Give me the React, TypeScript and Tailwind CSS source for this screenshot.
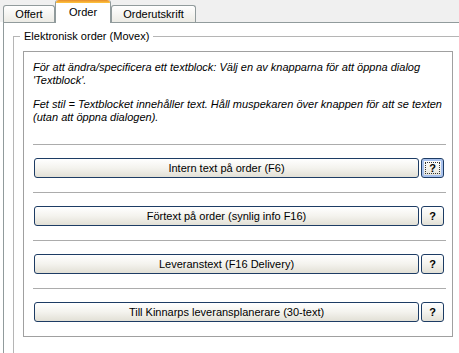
import React from 'react';

const rows = [
  { label: 'Intern text på order (F6)', focused: true },
  { label: 'Förtext på order (synlig info F16)', focused: false },
  { label: 'Leveranstext (F16 Delivery)', focused: false },
  { label: 'Till Kinnarps leveransplanerare (30-text)', focused: false },
];

function XpButton({ children, className = '' }: { children: React.ReactNode; className?: string }) {
  return (
    <button
      className={`h-[20px] rounded-[3px] border border-[#1d3c64] bg-gradient-to-b from-white via-[#f4f3ee] to-[#e2e0d6] text-[11px] leading-none text-black ${className}`}
    >
      {children}
    </button>
  );
}

function HelpButton({ focused }: { focused: boolean }) {
  if (!focused) {
    return <XpButton className="w-[23px] font-bold">?</XpButton>;
  }
  return (
    <button className="relative h-[20px] w-[23px] rounded-[3px] border border-[#1d3c64] bg-gradient-to-b from-white via-[#f4f3ee] to-[#e2e0d6] text-[11px] font-bold leading-none text-black shadow-[inset_0_0_0_2px_#a9c2ee]">
      <span className="absolute inset-[3px] border border-dotted border-[#333]" />
      ?
    </button>
  );
}

export default function App() {
  return (
    <div
      className="flex h-[353px] w-[459px] flex-col overflow-hidden bg-white text-[11px] text-black"
      style={{ fontFamily: '"Liberation Sans", Arial, sans-serif' }}
    >
      {/* tab strip */}
      <div className="flex h-[27px] items-end bg-[#f0f0f0] pl-[3px]">
        <div className="flex h-[17px] w-[52px] items-center justify-center rounded-t-[3px] border border-b-0 border-[#919b9c] bg-gradient-to-b from-white to-[#ecebe5]">
          Offert
        </div>
        <div className="relative z-10 -mb-px flex h-[23px] w-[56px] flex-col rounded-t-[3px] border-x border-[#919b9c] bg-white">
          <div className="h-[3px] rounded-t-[3px] bg-gradient-to-b from-[#e68b2c] to-[#ffc73c]" />
          <div className="flex flex-1 items-center justify-center pb-[2px]">Order</div>
        </div>
        <div className="flex h-[17px] w-[85px] items-center justify-center rounded-t-[3px] border border-b-0 border-[#919b9c] bg-gradient-to-b from-white to-[#ecebe5]">
          Orderutskrift
        </div>
      </div>

      {/* tab page */}
      <div className="ml-[3px] flex-1 border-l border-t border-[#919b9c] bg-white">
        <div className="relative ml-[9px] mt-[13px] h-[400px] border-l border-t border-[#b5b5b5]">
          <span className="absolute left-[6px] top-[-7px] bg-white px-[4px] leading-[13px]">
            Elektronisk order (Movex)
          </span>

          <div className="ml-[9px] mt-[14px] w-[430px] border border-[#a0a0a0] bg-white pl-[9px] pr-[6px] pt-[9px]">
            <div className="italic leading-[13px]">
              <p>För att ändra/specificera ett textblock: Välj en av knapparna för att öppna dialog 'Textblock'.</p>
              <p className="mt-[11px]">
                Fet stil = Textblocket innehåller text. Håll muspekaren över knappen för att se texten (utan att öppna dialogen).
              </p>
            </div>

            <div className="mt-[20px] flex flex-col">
              {rows.map(row => (
                <div key={row.label} className="flex flex-col">
                  <div className="h-px bg-[#acacac]" />
                  <div className="mb-[14px] mt-[13px] flex gap-[2px] pl-[1px]">
                    <XpButton className="w-[385px]">{row.label}</XpButton>
                    <HelpButton focused={row.focused} />
                  </div>
                </div>
              ))}
            </div>
          </div>
        </div>
      </div>
    </div>
  );
}
